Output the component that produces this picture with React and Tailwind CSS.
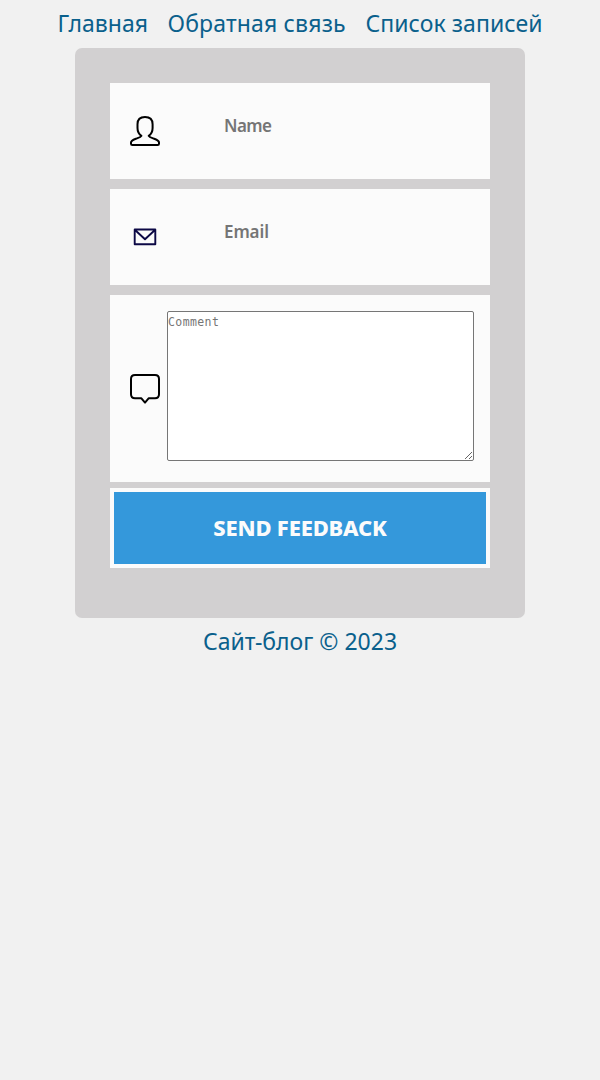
const UserIcon = () => (
  <svg className="block size-[30px]" viewBox="0 0 30 30" fill="none" stroke="#000" strokeWidth="2" strokeLinecap="round" strokeLinejoin="round">
    <path d="M11.4 19.8C8.4 17.8 7.5 15.4 7.5 12V8.2C7.5 3.6 10.4 1 15 1S22.6 3.6 22.6 8.2V12C22.6 15.4 21.7 17.8 18.7 19.8C19.3 21.2 21.5 21.8 24.2 22.8C27.7 24.1 29 24.9 29 26.5V27.7Q29 29 27.6 29H2.4Q1 29 1 27.7V26.5C1 24.9 2.4 24.1 5.9 22.8C8.6 21.8 10.8 21.2 11.4 19.8" />
  </svg>
);

const MailIcon = () => (
  <svg className="block size-[30px]" viewBox="0 0 30 30" fill="none" stroke="#0c0845" strokeWidth="1.9" strokeLinejoin="round">
    <path d="M4.7 7.5H25.3V22.3H4.7ZM4.8 7.7L15 17.2L25.2 7.7" />
  </svg>
);

const CommentIcon = () => (
  <svg className="block size-[30px]" viewBox="0 0 30 30" fill="none" stroke="#000" strokeWidth="2" strokeLinecap="round" strokeLinejoin="round">
    <path d="M5 1H25Q29 1 29 5V20.2Q29 24.2 25 24.2H18.8L15 28.6L11.2 24.2H5Q1 24.2 1 20.2V5Q1 1 5 1Z" />
  </svg>
);

const Field = ({ icon, label }) => (
  <div className="mb-2.5 flex h-24 items-center bg-[#fbfbfb] pl-5">
    {icon}
    <input
      placeholder={label}
      aria-label={label}
      className={`mb-2.5 ml-16 h-10 w-60 bg-transparent text-[17px] font-semibold outline-none placeholder:text-[#757575] ${label === "Name" ? "tracking-[-0.6px]" : "tracking-[-0.1px]"}`}
    />
  </div>
);

export default function App() {
  return (
    <div className="min-h-screen bg-[#f1f1f1] font-['Noto_Sans',sans-serif] text-[23px] leading-[46px] text-[#0a608c]">
      <nav className="flex h-12 justify-center gap-5 whitespace-nowrap">
        <a href="#home" className="w-[90px]">Главная</a>
        <a href="#feedback" className="w-[178px] tracking-[0.16px]">Обратная связь</a>
        <a href="#posts" className="w-[177px] tracking-[0.06px]">Список записей</a>
      </nav>
      <form className="mx-auto h-[570px] w-[450px] rounded-[7px] bg-[#d2d0d1] p-[35px]">
        <Field icon={<UserIcon />} label="Name" />
        <Field icon={<MailIcon />} label="Email" />
        <div className="flex h-[187px] bg-[#fbfbfb] pl-5">
          <div className="pt-[79px]">
            <CommentIcon />
          </div>
          <textarea
            placeholder="Comment"
            aria-label="Comment"
            className="ml-[7px] mt-4 h-[150px] w-[307px] rounded-[2px] border border-[#767676] bg-white pt-[3px] font-['DejaVu_Sans_Mono',monospace] text-[11.5px] leading-[15px] tracking-[0.4px] outline-none placeholder:text-[#757575]"
          />
        </div>
        <button type="button" className="mt-1.5 block h-20 w-full border-4 border-[#fbfbfb] bg-[#3498db] pb-0.5 text-[22px] font-extrabold leading-[70px] tracking-[-0.2px] text-[#fbfbfb]">
          SEND FEEDBACK
        </button>
      </form>
      <footer className="flex h-12 justify-center whitespace-nowrap">Сайт-блог © 2023</footer>
    </div>
  );
}
